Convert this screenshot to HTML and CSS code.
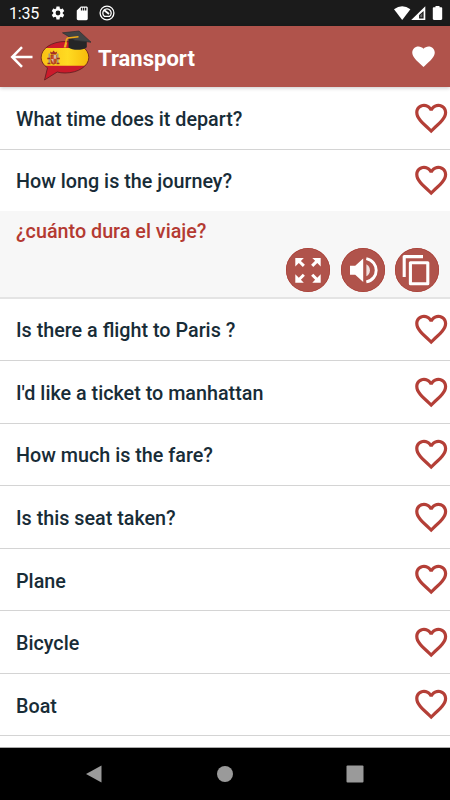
FILE: index.html
```html
<!DOCTYPE html>
<html lang="en">
<head>
<meta charset="utf-8">
<title>Transport</title>
<link rel="stylesheet" href="styles.css">
</head>
<body>
<svg class="defs" aria-hidden="true">
  <symbol id="heart-line" viewBox="0 0 24 24"><path d="M16.5 3c-1.74 0-3.41.81-4.5 2.09C10.91 3.81 9.24 3 7.5 3 4.42 3 2 5.42 2 8.5c0 3.78 3.4 6.86 8.55 11.54L12 21.35l1.45-1.32C18.6 15.36 22 12.28 22 8.5 22 5.42 19.58 3 16.5 3zm-4.4 15.55l-.1.1-.1-.1C7.14 14.24 4 11.39 4 8.5 4 6.5 5.5 5 7.5 5c1.54 0 3.04.99 3.57 2.36h1.87C13.46 5.99 14.96 5 16.5 5c2 0 3.5 1.5 3.5 3.5 0 2.89-3.14 5.74-7.9 10.05z"/></symbol>
</svg>
<div class="screen">
  <div class="status">
    <span class="clock">1:35</span>
    <svg class="gear" viewBox="0 0 24 24"><path d="M19.14 12.94c.04-.3.06-.61.06-.94s-.02-.64-.07-.94l2.03-1.58c.18-.14.23-.41.12-.61l-1.92-3.32c-.12-.22-.37-.29-.59-.22l-2.39.96c-.5-.38-1.03-.7-1.62-.94L14.4 2.81c-.04-.24-.24-.41-.48-.41h-3.84c-.24 0-.43.17-.47.41L9.25 5.35c-.59.24-1.13.57-1.62.94l-2.39-.96c-.22-.08-.47 0-.59.22L2.74 8.87c-.12.21-.08.47.12.61l2.03 1.58c-.05.3-.09.63-.09.94s.02.64.07.94l-2.03 1.58c-.18.14-.23.41-.12.61l1.92 3.32c.12.22.37.29.59.22l2.39-.96c.5.38 1.03.7 1.62.94l.36 2.54c.05.24.24.41.48.41h3.84c.24 0 .44-.17.47-.41l.36-2.54c.59-.24 1.13-.56 1.62-.94l2.39.96c.22.08.47 0 .59-.22l1.92-3.32c.12-.22.07-.47-.12-.61zM12 15.6A3.6 3.6 0 1 1 12 8.4a3.6 3.6 0 0 1 0 7.2z"/></svg>
    <svg class="sd" viewBox="0 0 24 24"><path d="M18 2h-8L4.02 8 4 20c0 1.1.9 2 2 2h12c1.1 0 2-.9 2-2V4c0-1.1-.9-2-2-2zm-6 6h-2V4h2zm3 0h-2V4h2zm3 0h-2V4h2z"/></svg>
    <svg class="radar" viewBox="0 0 16 16"><circle cx="8" cy="8" r="6.9" fill="none" stroke="#fff" stroke-width="1.3"/><path d="M5.300 11.300a4.200 4.200 0 1 1 5.400 0z" fill="none" stroke="#fff" stroke-width="1.300"/><path d="M5 5l5 4" stroke="#fff" stroke-width="1.8"/></svg>
    <svg class="signals" viewBox="0 0 50 15"><path d="M0 3.3Q8.2-2.6 16.4 3.3L8.2 14z"/><path fill-rule="evenodd" d="M31.3.2V14H17.2zM29.6 5v7.4h-4.5V9z"/><path d="M26.3 9.2l2-2v4h-2z" opacity=".35"/><path d="M41.500 0h4v1.200h1.800c.5 0 .9.4.9.9v10.700c0 .7-.5 1.200-1.200 1.200h-7c-.7 0-1.200-.5-1.200-1.200V2.100c0-.5.4-.9.9-.9h1.800z"/></svg>
  </div>
  <header class="bar">
    <svg class="back" viewBox="0 0 24 24"><path d="M22.5 12H2M12 2.2L2.2 12l9.8 9.8" fill="none" stroke="#fff" stroke-width="2.5"/></svg>
    <svg class="logo" viewBox="0 0 54 54">
      <defs>
        <linearGradient id="gold" x2="1" y2="0"><stop stop-color="#f9bd12"/><stop offset=".55" stop-color="#ffdb22"/><stop offset="1" stop-color="#f5b506"/></linearGradient>
        <clipPath id="bubble"><path id="bubble-shape" d="M9.500 40.800C5.300 38 3.200 34.500 3.200 30.300 3.200 21.500 13.800 14.500 27 14.500s23.800 7 23.800 15.800S40.200 46 27 46c-3 0-5.300-.3-7.800-1L6.500 53z"/></clipPath>
      </defs>
      <g clip-path="url(#bubble)"><path fill="#cb1b2b" d="M0 8h54v46H0z"/><path fill="url(#gold)" d="M0 21h54v17.800H0z"/></g>
      <use href="#bubble-shape" fill="none" stroke="#5b1d20" stroke-width=".8"/>
      <g transform="translate(-.5 2)">
        <path d="M11 24.500h1.500v10H11zm8.500 0H21v10h-1.500z" fill="#a8997c"/>
        <path d="M9.800 29.500h3m6.500 0h3M10 34.500h3m6 0h3" stroke="#9f2c25" stroke-width="1.400"/>
        <path d="M13.400 26h5.400v6.200q0 3-2.700 3t-2.700-3z" fill="#c94a27" stroke="#8c3620" stroke-width=".6"/>
        <path d="M16.200 26h2.500v3.800h-2.500zM13.500 30h2.500v4.200z" fill="#d5b6a4"/>
        <path d="M13.300 25.300l-.8-2.700 2.100.8 1.500-1.800 1.500 1.800 2.100-.8-.8 2.700z" fill="#a52d25"/>
      </g>
      <path d="M30.500 11v9.500c4 3 14 3.200 18.300-.3V13z" fill="#252627"/>
      <path d="M24.500 5.800L41 4l12 11.200-16-1.800z" fill="#414344" stroke="#2c2e2f" stroke-width=".7"/>
      <path d="M40.500 9.800L30 11q-1.700.4-2.200 4.500v2" fill="none" stroke="#efac18" stroke-width="1.400"/>
      <path d="M27 15.500h2l-.8 5h-2.500z" fill="#f1b51f"/>
    </svg>
    <h1 class="title">Transport</h1>
    <svg class="fav" viewBox="0 0 24 24"><path d="M12 21.350l-1.450-1.320C5.400 15.360 2 12.280 2 8.500 2 5.420 4.420 3 7.500 3c1.740 0 3.410.81 4.500 2.090C13.090 3.810 14.760 3 16.500 3 19.580 3 22 5.420 22 8.500c0 3.780-3.400 6.860-8.550 11.540z"/></svg>
  </header>
  <main class="list">
    <div class="row"><span>What time does it depart?</span><svg class="heart"><use href="#heart-line"/></svg></div>
    <div class="row open"><span>How long is the journey?</span><svg class="heart"><use href="#heart-line"/></svg></div>
    <section class="answer">
      <p class="phrase">¿cuánto dura el viaje?</p>
      <div class="actions">
        <button class="action" aria-label="Expand"><svg viewBox="0 0 44 44"><path d="M9.300 10h8.500l-2.900 2.900 4 3.900-2.100 2.100-4-4-3.500 3.500zM34.700 10v8.400l-3.400-3.400-4 4-2.200-2.200 4-4-2.800-2.800zM9.300 34.700v-8.500l3.500 3.500 4-4 2.100 2.100-4 4 2.900 2.900zM34.700 34.700h-8.400l2.800-2.900-4-4 2.200-2.100 4 4 3.400-3.500z" fill="#fff"/></svg></button>
        <button class="action" aria-label="Listen"><svg viewBox="0 0 44 44"><path d="M9 17.800h5.200l8-7.300v23.600l-8-7.300H9z" fill="#fff"/><path d="M25.400 16.300q3.500 2 3.500 6t-3.500 6z" fill="#fff" opacity=".82"/><path d="M25.300 10.700c13.200 2.700 13.200 20.500 0 23.200" fill="none" stroke="#fff" stroke-width="2.900"/></svg></button>
        <button class="action" aria-label="Copy"><svg viewBox="0 0 44 44"><path d="M9.200 29V8.600H28M15.400 14.700h17.400v21H15.400z" fill="none" stroke="#fff" stroke-width="3.100" stroke-linejoin="round"/></svg></button>
      </div>
    </section>
    <div class="row"><span>Is there a flight to Paris ?</span><svg class="heart"><use href="#heart-line"/></svg></div>
    <div class="row"><span>I'd like a ticket to manhattan</span><svg class="heart"><use href="#heart-line"/></svg></div>
    <div class="row"><span>How much is the fare?</span><svg class="heart"><use href="#heart-line"/></svg></div>
    <div class="row"><span>Is this seat taken?</span><svg class="heart"><use href="#heart-line"/></svg></div>
    <div class="row"><span>Plane</span><svg class="heart"><use href="#heart-line"/></svg></div>
    <div class="row"><span>Bicycle</span><svg class="heart"><use href="#heart-line"/></svg></div>
    <div class="row"><span>Boat</span><svg class="heart"><use href="#heart-line"/></svg></div>
  </main>
  <nav class="nav">
    <svg viewBox="0 0 18 18"><path d="M1 9L16.500.500v17z"/></svg>
    <svg viewBox="0 0 18 18"><circle cx="9" cy="9" r="8"/></svg>
    <svg viewBox="0 0 18 18"><rect x=".5" y=".5" width="17" height="17" rx="1"/></svg>
  </nav>
</div>
</body>
</html>
```
FILE: styles.css
```css
* { box-sizing: border-box; }
body { margin: 0; font-family: Roboto, sans-serif; background: #fff; }
svg { display: block; flex: none; }
.defs { position: absolute; width: 0; height: 0; }
.screen { width: 450px; height: 800px; display: flex; flex-direction: column; overflow: hidden; }

.status { height: 26px; flex: none; display: flex; align-items: center; background: #1b1b1b; color: #fff; padding: 0 8px 0 9px; }
.status svg { fill: #fff; }
.clock { width: 42px; font-size: 16px; line-height: 26px; padding-top: 2px; letter-spacing: -.2px; }
.gear { width: 16px; height: 16px; margin-left: -1px; }
.sd { width: 16.500px; height: 16.500px; margin-left: 8px; }
.radar { width: 16px; height: 16px; margin-left: 8px; }
.signals { width: 50px; height: 15px; margin-left: auto; margin-right: -2px; }

.bar { height: 61px; flex: none; display: flex; align-items: center; background: #b0534b; padding: 2px 13px 0 10px; position: relative; box-shadow: 0 1px 4px rgba(0, 0, 0, .22); }
.back { width: 24px; height: 24px; margin-top: -1px; }
.logo { width: 54px; height: 54px; margin-left: 4px; margin-top: -7px; }
.title { margin: 2px 0 0 6px; font-size: 22px; line-height: 28px; font-weight: 700; color: #fff; }
.fav { width: 27px; height: 27px; margin-left: auto; margin-top: -2px; fill: #fff; }

.list { flex: 1; min-height: 0; overflow: hidden; border-bottom: 1px solid #aaa; }
.row { height: 62.550px; display: flex; align-items: center; justify-content: space-between; padding: 3px 0 0 16px; border-bottom: 1px solid #d4d4d4; font-size: 19.750px; font-weight: 500; color: #182c37; }
.row.open { height: 61.500px; border-bottom: 0; }
.heart { width: 38.400px; height: 38.400px; margin-top: -3px; fill: #b43f37; }
.answer { height: 87.500px; background: #f7f7f7; border-bottom: 2px solid #e4e4e4; padding: 8px 11px 0 16px; }
.phrase { margin: 0; font-size: 19.750px; line-height: 26px; font-weight: 500; color: #b43a32; }
.actions { display: flex; justify-content: flex-end; gap: 10.500px; margin-top: 3px; }
.action { width: 44px; height: 44px; padding: 0; border: 0; border-radius: 50%; background: #b0534b; box-shadow: inset 0 0 0 .5px #a5342b; }
.action svg { width: 44px; height: 44px; }

.nav { height: 52px; flex: none; background: #000; display: flex; align-items: center; justify-content: space-between; padding: 0 86px 0 85px; }
.nav svg { width: 18px; height: 18px; fill: #9a9a9a; }
```
